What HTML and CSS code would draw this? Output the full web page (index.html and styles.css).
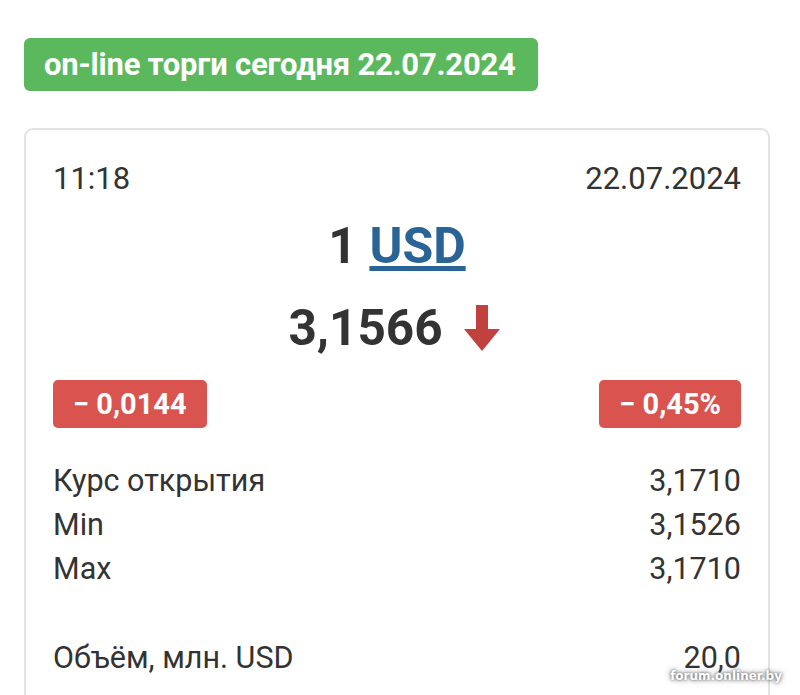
FILE: index.html
```html
<!DOCTYPE html>
<html>
<head>
  <title>Курс USD</title>
  <link rel="stylesheet" href="styles.css">
</head>
<body>
  <div class="page">
    <div class="today">on-line торги сегодня 22.07.2024</div>
    <div class="card">
      <div class="card-head">
        <span>11:18</span>
        <span>22.07.2024</span>
      </div>
      <div class="currency">1 <a href="#">USD</a></div>
      <div class="rate">
        3,1566
        <!-- Down arrow -->
        <svg class="arrow" width="36" height="46" viewBox="0 0 36 46">
          <path d="M12 0 H24 V24 H36 L18 46 L0 24 H12 Z" fill="#c0413d"/>
        </svg>
      </div>
      <div class="changes">
        <span class="change">− 0,0144</span>
        <span class="change">− 0,45%</span>
      </div>
      <div class="rows">
        <div class="row"><span>Курс открытия</span><span>3,1710</span></div>
        <div class="row"><span>Min</span><span>3,1526</span></div>
        <div class="row"><span>Max</span><span>3,1710</span></div>
      </div>
      <div class="row volume"><span>Объём, млн. USD</span><span>20,0</span></div>
    </div>
  </div>
  <div class="watermark">forum.onliner.by</div>
</body>
</html>
```
FILE: styles.css
```css
/*Page*/
body {
  margin: 0;
  background: #fff;
  color: #333;
  font-family: Roboto, "Noto Sans", sans-serif;
  overflow: hidden;
}
.page {
  padding: 38px 30px 0 24px;
}
/*Green label*/
.today {
  display: inline-block;
  background-color: #5cb85c;
  color: #fff;
  font-weight: bold;
  font-size: 31px;
  line-height: 53px;
  padding: 0 22px 0 20px;
  border-radius: 6px;
  letter-spacing: -0.2px;
}
/*Rate card*/
.card {
  margin-top: 37px;
  border: 2px solid #e4e4e4;
  border-radius: 9px;
  padding: 29px 27px 40px 27px;
  height: 600px;
}
.card-head {
  display: flex;
  justify-content: space-between;
  font-size: 31px;
  line-height: 40px;
}
.currency {
  text-align: center;
  font-weight: bold;
  font-size: 50px;
  line-height: 50px;
  margin-top: 22px;
}
.currency a {
  color: #2a6496;
}
.rate {
  display: flex;
  justify-content: center;
  align-items: center;
  gap: 21px;
  font-weight: bold;
  font-size: 49.5px;
  line-height: 60px;
  margin-top: 27px;
  padding-right: 6px;
}
/*Red change labels*/
.changes {
  display: flex;
  justify-content: space-between;
  margin-top: 22px;
}
.change {
  background-color: #d9534f;
  color: #fff;
  font-weight: bold;
  font-size: 29px;
  line-height: 48px;
  padding: 0 20px;
  border-radius: 5px;
}
.rows {
  margin-top: 31px;
}
.row {
  display: flex;
  justify-content: space-between;
  font-size: 30.5px;
  line-height: 44px;
}
.volume {
  margin-top: 45px;
}
/*Watermark*/
.watermark {
  position: absolute;
  right: 18px;
  bottom: 12px;
  color: #fff;
  font-family: "DejaVu Sans", sans-serif;
  font-weight: bold;
  font-size: 12px;
  text-shadow: 0 0 3px #555, 0 0 6px #888;
}
```
